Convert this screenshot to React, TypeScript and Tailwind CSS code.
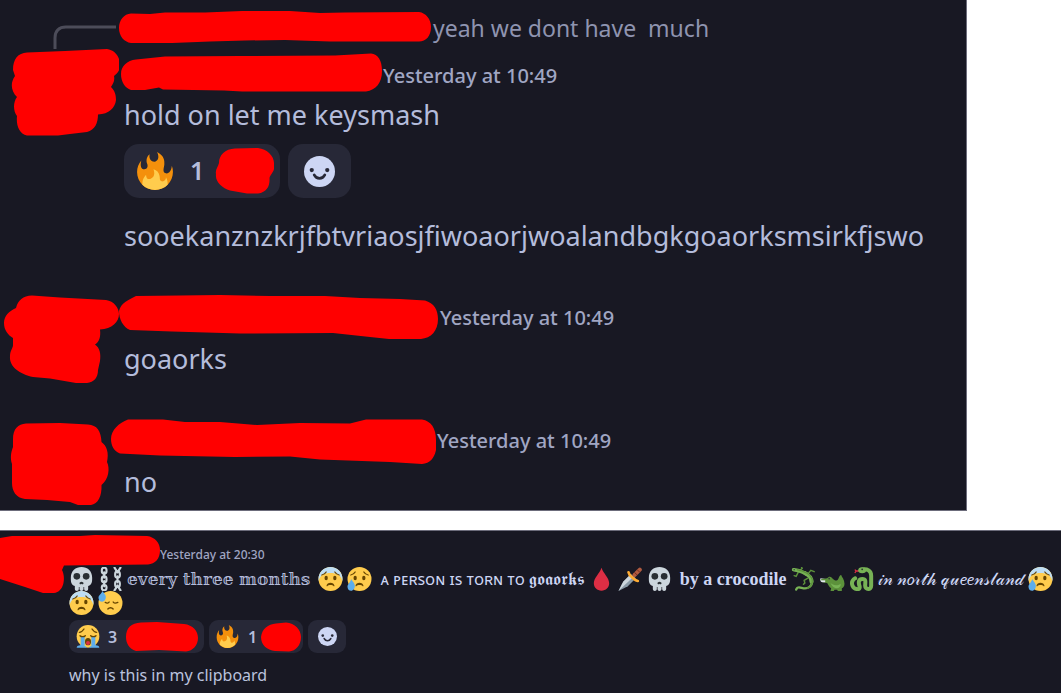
import type { ReactNode } from "react";

function Redaction({ box, d, className }: { box: string; d: string; className: string }) {
  return (
    <svg viewBox={box} className={`shrink-0 ${className}`} aria-hidden="true">
      <path fill="#ff0000" d={d} />
    </svg>
  );
}

function Emoji({ children, className = "size-[25px]", label }: { children: ReactNode; className?: string; label: string }) {
  return (
    <svg viewBox="0 0 36 36" role="img" aria-label={label} className={`shrink-0 ${className}`}>
      {children}
    </svg>
  );
}

function Fire({ className }: { className: string }) {
  return (
    <Emoji label="fire" className={className}>
      <path fill="#F4900C" d="M35 19c0-2.062-.367-4.039-1.04-5.868-.46 5.389-3.333 8.157-6.335 6.868-2.812-1.208-.917-5.917-.777-8.164.236-3.809-.012-8.169-6.931-11.794 2.875 5.5.333 8.917-2.333 9.125-2.958.231-5.667-2.542-4.667-7.042-3.238 2.386-3.332 6.402-2.333 9 1.042 2.708-.042 4.958-2.583 5.208-2.84.28-4.418-3.041-2.963-8.333C2.52 10.965 1 14.805 1 19c0 9.389 7.611 17 17 17s17-7.611 17-17z" />
      <path fill="#FFCC4D" d="M28.394 23.999c.148 3.084-2.561 4.293-4.019 3.709-2.106-.843-1.541-2.291-2.083-5.291s-2.625-5.083-5.708-6c2.25 6.333-1.247 8.667-3.08 9.084-1.872.426-3.753-.001-3.968-4.007C7.352 23.668 6 26.676 6 30c0 .368.023.73.055 1.09C9.125 34.124 13.342 36 18 36s8.875-1.876 11.945-4.91c.032-.36.055-.722.055-1.09 0-2.187-.584-4.236-1.606-6.001z" />
    </Emoji>
  );
}

function Skull() {
  return (
    <Emoji label="skull">
      <path fill="#CCD6DD" d="M34 16C34 6 26.837 0 18 0 9.164 0 2 6 2 16c0 5.574.002 10.388 6 12.64V33c0 1.657 1.343 3 3 3s3-1.343 3-3v-3.155c.327.012.66.155 1 .155v3c0 1.657 1.343 3 3 3s3-1.343 3-3v-3c.34 0 .673-.143 1-.155V33c0 1.657 1.344 3 3 3 1.657 0 3-1.343 3-3v-4.36c5.998-2.252 6-7.066 6-12.64z" />
      <circle fill="#292F33" cx="11" cy="14" r="5" />
      <circle fill="#292F33" cx="25" cy="14" r="5" />
      <path fill="#292F33" d="M19.903 23.062C19.651 22.449 18.9 22 18 22s-1.652.449-1.903 1.062c-.632.176-1.097.75-1.097 1.438 0 .828.671 1.5 1.5 1.5.655 0 1.206-.422 1.41-1.007.03 0 .06.007.09.007s.06-.007.09-.007c.204.585.755 1.007 1.41 1.007.828 0 1.5-.672 1.5-1.5 0-.688-.466-1.261-1.097-1.438z" />
    </Emoji>
  );
}

function Chains() {
  return (
    <Emoji label="chains">
      <g fill="none" stroke="#CCD6DD" strokeWidth="3.200" strokeLinecap="round">
        <rect x="5" y="1" width="7" height="9" rx="3.500" />
        <rect x="5" y="14" width="7" height="9" rx="3.500" />
        <rect x="5" y="27" width="7" height="8" rx="3.500" />
        <path d="M8.500 8v8M8.500 21v8" />
        <rect x="25" y="7" width="7" height="9" rx="3.500" />
        <rect x="25" y="21" width="7" height="9" rx="3.500" />
        <path d="M24 1l4.500 7M33 1l-4.500 7M28.500 14v9M28.500 28l-4.500 7M28.500 28l4.500 7" />
      </g>
    </Emoji>
  );
}

const DROP_LOW = "M11 28c0 4-2.200 7.500-5.500 7.500S0 33 0 29.500C0 26 4.500 23 5.500 18 8 22 11 25 11 28z";

function WorriedFace({ chilled = false, drop = false, label }: { chilled?: boolean; drop?: boolean; label: string }) {
  return (
    <Emoji label={label}>
      <circle fill="#FFCC4D" cx="18" cy="18" r="18" />
      {chilled && <path fill="#BDDDF4" d="M0 18C0 8 8 0 18 0s18 8 18 18c0 1-.1 2-.3 3C34 12 27 9 18 9S2 12 .3 21C.1 20 0 19 0 18z" />}
      <ellipse fill="#664500" cx="11.500" cy="16.500" rx="2.500" ry="3.500" />
      <ellipse fill="#664500" cx="24.500" cy="16.500" rx="2.500" ry="3.500" />
      <path fill="none" stroke="#664500" strokeWidth="1.900" strokeLinecap="round" d="M5 12c3-.5 5-2 6.500-4.500M31 12c-3-.5-5-2-6.500-4.500" />
      <path fill="#664500" d="M12 28c.5-3 3-4.500 6-4.500s5.500 1.500 6 4.500c.1.800-.7 1-1.200.7C21.500 27.500 20 27 18 27s-3.500.5-4.800 1.700c-.5.300-1.300.1-1.200-.7z" />
      {drop && <path fill="#5DADEC" d={DROP_LOW} />}
    </Emoji>
  );
}

function SweatFace() {
  return (
    <Emoji label="downcast face with sweat">
      <circle fill="#FFCC4D" cx="18" cy="18" r="18" />
      <g fill="none" stroke="#664500" strokeWidth="2" strokeLinecap="round">
        <path d="M10 17c2 1.500 5 1.500 6-.5M22 16.500c1 2 4 2 7 .5M14 27c2-2.500 6-2.500 8 0" />
      </g>
      <path fill="#5DADEC" d="M11 9c0 4-2.200 7-5.500 7S0 13.500 0 10C0 6.500 4.500 4 6 0c2.500 4 5 6 5 9z" />
    </Emoji>
  );
}

function SobFace() {
  return (
    <Emoji label="loudly crying face" className="size-6">
      <circle fill="#FFCC4D" cx="18" cy="17" r="17" />
      <path fill="#5DADEC" d="M7 17h6v15c2 0 3 1 3 2H1c0-3 3-3 6-4zM23 17h6v13c3 1 6 1 6 4H20c0-1 1-2 3-2z" />
      <g fill="none" stroke="#664500" strokeWidth="2" strokeLinecap="round">
        <path d="M6 16c2 2 6 2 8 0M22 16c2 2 6 2 8 0M5 11c3 0 5-2 7-5M31 11c-3 0-5-2-7-5" />
      </g>
      <ellipse fill="#664500" cx="18" cy="25" rx="4.500" ry="5.500" />
      <ellipse fill="#DD2E44" cx="18" cy="27" rx="3" ry="3" />
    </Emoji>
  );
}

function Blood() {
  return (
    <Emoji label="drop of blood">
      <path fill="#DD2E44" d="M29.500 24C29.500 31 24.500 35.500 18 35.500S6.500 31 6.500 24C6.500 16 15 10 18 1c3 9 11.500 15 11.500 23z" />
    </Emoji>
  );
}

function Dagger() {
  return (
    <Emoji label="dagger">
      <path fill="#8899A6" d="M19 11L7 22 0 36l14-7 12-12z" />
      <path fill="#CCD6DD" d="M18 11L7 22 0 36l22-21z" />
      <path fill="none" stroke="#AF5A40" strokeWidth="6" strokeLinecap="round" d="M24 12l8-8" />
      <path fill="none" stroke="#662113" strokeWidth="1.200" d="M24 8l4 4M28 4l4 4" />
      <path fill="none" stroke="#FFAC33" strokeWidth="4" strokeLinecap="round" d="M15 8c1 5 3 6 6 8s3 4 8 5" />
    </Emoji>
  );
}

function Lizard() {
  return (
    <Emoji label="lizard">
      <path fill="none" stroke="#5C913B" strokeWidth="2.200" strokeLinecap="round" d="M10 8L7 14l-3-1M12 6l4-4-1-2M25 10l4-5 5 2M24 17l-5 3 1 4-2 2" />
      <path fill="none" stroke="#77B255" strokeWidth="5" strokeLinecap="round" d="M3 4c6 1 13 2 20 7" />
      <path fill="none" stroke="#77B255" strokeWidth="6" strokeLinecap="round" d="M20 9c6 3 10 7 10 13" />
      <path fill="none" stroke="#77B255" strokeWidth="3.500" strokeLinecap="round" d="M31 21c0 8-6 12-13 11-5-1-9-4-11 2" />
      <path fill="none" stroke="#5C913B" strokeWidth="1.800" d="M8 4c10 2 20 6 23 14 1 7-2 12-8 14" />
      <circle fill="#292F33" cx="4" cy="4" r="1" />
    </Emoji>
  );
}

function Crocodile() {
  return (
    <Emoji label="crocodile">
      <path fill="#5C913B" d="M1 18l9-1c2-3 5-3 7-1 3 3 5 5 8 4 3-2 2-7 6-8 1 3 5 7 5 13 0 4-2 6-4 7v4h-6l-1-2h-4l-1 2h-5l1-4c-3-2-4-5-6-8l-7-1z" />
      <path fill="#77B255" d="M15 24c3 3 10 5 15 1 1 3-1 6-5 7-4 0-8-3-10-8z" />
      <path fill="#E1E8ED" d="M0 17l7 1v5H3c-3 0-4-4-3-6z" />
      <path stroke="#5C913B" strokeWidth="2" d="M1 19h9" />
      <circle fill="#292F33" cx="13" cy="17.500" r="1.200" />
    </Emoji>
  );
}

function Snake() {
  return (
    <Emoji label="snake">
      <path fill="none" stroke="#DD2E44" strokeWidth="1.900" d="M15 6h-5L8 4M10 6L8 9" />
      <path fill="none" stroke="#77B255" strokeWidth="6" strokeLinecap="round" strokeLinejoin="round" d="M18 4c9-2 14.500 2 14.500 9v15c0 7-9 6-9 0 0-5 2-10-4-10s-6 5-5 9c2 5 0 7-4 6-6-1-8-8-6-12 1-2 2-3 4-4" />
      <ellipse fill="#77B255" cx="19" cy="5" rx="6" ry="4.500" />
      <circle fill="#292F33" cx="19" cy="3.500" r="1.300" />
    </Emoji>
  );
}

function Smile({ className }: { className: string }) {
  return (
    <svg viewBox="0 0 32 32" className={className} aria-hidden="true">
      <circle cx="16" cy="16" r="16" fill="#cdd6f4" />
      <circle cx="8" cy="14.500" r="2.200" fill="#272837" />
      <circle cx="24" cy="14.500" r="2.200" fill="#272837" />
      <path d="M10.500 19.500c2.500 4.800 8.500 4.800 11 0" fill="none" stroke="#272837" strokeWidth="2.800" strokeLinecap="round" />
    </svg>
  );
}

const STAMP_LARGE = "text-[20px] leading-7 font-medium text-[#a0a6c3] whitespace-nowrap";
const BODY_LARGE = "text-[27px] leading-9 text-[#b4bcdb]";
const CHIP_LARGE = "flex h-[54px] items-center rounded-[15px] bg-[#272837]";
const CHIP_SMALL = "flex h-[33px] items-center rounded-[9px] bg-[#272837]";

export default function App() {
  return (
    <main className="min-h-screen bg-white font-['Noto_Sans','DejaVu_Sans',sans-serif]">
      <section className="mr-[94px] border-r border-b border-[#6c6c7b] bg-[#181823] pb-[5px]">
        <div className="flex h-[49px] items-start">
          <svg viewBox="0 0 119 49" className="h-[49px] w-[119px] shrink-0" aria-hidden="true">
            <path d="M55 49V38c0-7 4-11 11-11h50" fill="none" stroke="#4c4c59" strokeWidth="3" />
          </svg>
          <Redaction
            className="mt-2 h-9 w-[314px]"
            box="119 8 314 36"
            d="M119 28C119 20 124 14 131 13.500L150 14 165 12.500 205 12.500 242 11 290 11 320 13 345 12.500 419 12C426 13 431 19 431 27 431 36 426 41.500 419 41.500L330 41.500 285 40 245 40.500 210 41.500 172 43 131 43C124 42 119 36 119 28Z"
          />
          <p className="mt-[10px] text-[23px] leading-9 whitespace-pre text-[#8f94b0]">yeah we dont have  much</p>
        </div>

        <article className="flex h-[246px]">
          <Redaction
            className="mr-[5px] h-[88px] w-[119px]"
            box="0 49 119 88"
            d="M13 70C13 59 18 53 27 52.500L65 51 107 49C115 50 120 57 120 65 120 71 117 74 114 76 115 81 113 84 111 87 115 91 116 95 116 100 115 108 109 114 98 114.500 98 123 95 130 87 132L70 134 58 135.500 27 135.500C19 134 16 125 17 116 13 111 13 102 17 97 11 91 10 83 15 76Z"
          />
          <div className="-ml-[3px] grow">
            <header className="flex h-12 items-center">
              <Redaction
                className="h-[40px] w-[262px]"
                box="121 53 262 40"
                d="M121 74C121 66 127 60.500 136 59.500L165 56.500 240 56 335 55.500 371 53.500C378 54.500 382 60 382 71 382 83 376 90 366 91.500L242 91.500 224 90.500 163 89.500 159 87.500 145 90 131 90C125 88 121 82 121 74Z"
              />
              <time className={`${STAMP_LARGE} pt-1.5`}>Yesterday at 10:49</time>
            </header>
            <div className="ml-[3px]">
              <p className={BODY_LARGE}>hold on let me keysmash</p>
              <div className="mt-[11px] flex gap-2">
                <button className={`${CHIP_LARGE} w-[156px] pl-3`}>
                  <Fire className="size-[38px]" />
                  <span className="ml-4 text-[25px] font-semibold text-[#b5bddb]">1</span>
                  <Redaction
                    className="ml-[11px] h-[48px] w-[60px]"
                    box="215 147 60 48"
                    d="M216 174C215 170 218 167 219 163 219 155 225 149 235 148.500L258 148C267 149 274 156 274 163L274 169C273 173 270 175 269.500 178 270 186 267 192 258 193.500L247 193.500 230 190.500C222 188 215 182 216 174Z"
                  />
                </button>
                <button aria-label="Add reaction" className={`${CHIP_LARGE} w-[63px] justify-center`}>
                  <Smile className="size-[31px]" />
                </button>
              </div>
              <p className={`${BODY_LARGE} mt-5`}>sooekanznzkrjfbtvriaosjfiwoaorjwoalandbgkgoaorksmsirkfjswo</p>
            </div>
          </div>
        </article>

        <article className="flex h-[123px]">
          <Redaction
            className="h-[89px] w-[119px]"
            box="0 295 119 89"
            d="M4 323C4 316 9 311 16 308 18 300 23 296 32 295.500L60 297.500 106 300C114 301 119 308 119 314 119 322 112 329 100 329.500 101 337 99 342 95 344.500 100 348 101 354 100 361L98 370C98 378 94 382 87 383L76 383 50 378.500 33 377C20 374 9 367 10 356 10 351 13 348 13 345L13 338C8 335 4 330 4 323Z"
          />
          <div className="grow">
            <header className="flex h-[46px] items-center">
              <Redaction
                className="h-[46px] w-[321px]"
                box="119 295 321 46"
                d="M119 311C121 303 128 300 136 296L180 295.500 220 295 270 296 325 296 360 298 400 299 425 300.500C434 303 438 310 438 319 438 331 431 338 421 339L389 339 370 337 333 333 240 333.500 172 331.500 130 330C123 327 119 319 119 311Z"
              />
              <time className={STAMP_LARGE}>Yesterday at 10:49</time>
            </header>
            <p className={`${BODY_LARGE} ml-[5px]`}>goaorks</p>
          </div>
        </article>

        <article className="flex h-[87px]">
          <Redaction
            className="mt-[5px] h-[83px] w-[111px]"
            box="0 423 111 83"
            d="M13 439C13 429 18 424 26 423.500L60 423 88 424.500C97 425 101 431 101.500 442 107 446 109 453 107 462 110 468 109 479 101.500 485 102 496 98 504 91 505L78 505 70 502 47 500 25 499C16 498 12 491 12 483L12 464C10 458 11 452 13 447Z"
          />
          <div className="grow">
            <header className="flex h-[46px] items-center">
              <Redaction
                className="h-[47px] w-[326px]"
                box="111 418 326 47"
                d="M111 439C111 430 119 423 128 419.500L163 419.500 185 422 220 422 257 425 300 423 350 423.500 366 419.500 422 419.500C431 421 436 428 436 440L436 450C434 459 430 463 422 464L390 462 320 459.500 290 456.500 235 457 160 455.500 120 453.500C114 451 111 446 111 439Z"
              />
              <time className={STAMP_LARGE}>Yesterday at 10:49</time>
            </header>
            <p className={`${BODY_LARGE} ml-[13px]`}>no</p>
          </div>
        </article>
      </section>

      <section className="relative mt-[19px] border-t border-[#6c6c7b] bg-[#181823] pt-[12px] pb-[6px] pl-[69px]">
        <Redaction
          className="absolute top-1 left-0 h-[60px] w-40"
          box="0 535 160 60"
          d="M0 538L12 536 80 536 95 535 147 536C155 537 160 543 160 550 160 559 155 564 148 564.500L64 565.500 62 570C66 578 64 592 54 593L43 593 25 587 0 579Z"
        />
        <time className="ml-[91px] block h-6 text-[12px] leading-6 font-medium text-[#a0a6c3]">Yesterday at 20:30</time>
        <div className="flex flex-wrap items-center gap-x-[4px] text-[17px] leading-6 whitespace-nowrap text-[#cdd6f4] *:h-6">
          <Skull />
          <Chains />
          <span className="mr-1 font-['DejaVu_Serif',serif] text-[#b4bcdb]">𝕖𝕧𝕖𝕣𝕪 𝕥𝕙𝕣𝕖𝕖 𝕞𝕠𝕟𝕥𝕙𝕤</span>
          <WorriedFace chilled label="anxious face" />
          <WorriedFace drop label="sad but relieved face" />
          <span className="ml-1 text-[16px]">ᴀ ᴘᴇʀsᴏɴ ɪs ᴛᴏʀɴ ᴛᴏ</span>
          <span>𝖌𝖔𝖆𝖔𝖗𝖐𝖘</span>
          <Blood />
          <Dagger />
          <Skull />
          <span className="ml-1 font-['Liberation_Serif',serif] text-[18px] font-bold">by a crocodile</span>
          <Lizard />
          <Crocodile />
          <Snake />
          <span>𝒾𝓃 𝓃𝑜𝓇𝓉𝒽 𝓆𝓊𝑒𝑒𝓃𝓈𝓁𝒶𝓃𝒹</span>
          <WorriedFace chilled drop label="anxious face with sweat" />
          <WorriedFace chilled label="anxious face" />
          <SweatFace />
        </div>
        <div className="mt-[5px] flex gap-[5px]">
          <button className={`${CHIP_SMALL} w-[135px] pl-[7px]`}>
            <SobFace />
            <span className="ml-2 text-[16px] font-semibold text-[#b5bddb]">3</span>
            <Redaction
              className="ml-2 h-[30px] w-[73px]"
              box="126 622 73 30"
              d="M127 637C127 628 132 623 142 622.500L158 622 185 624C194 625 199 631 199 638 199 645 194 651 187 651.500L160 650 137 651C130 649 127 643 127 637Z"
            />
          </button>
          <button className={`${CHIP_SMALL} w-[94px] pl-[7px]`}>
            <Fire className="size-[23px]" />
            <span className="ml-[9px] text-[16px] font-semibold text-[#b5bddb]">1</span>
            <Redaction
              className="ml-1 h-[30px] w-[41px]"
              box="261 622 41 30"
              d="M261 637C262 629 268 624 276 623.500L286 622.500C295 623 301 630 301 637 301 645 296 651 289 651.500L275 651C267 650 261 645 261 637Z"
            />
          </button>
          <button aria-label="Add reaction" className={`${CHIP_SMALL} w-[38px] justify-center`}>
            <Smile className="size-[19px]" />
          </button>
        </div>
        <p className="mt-[10px] text-[16px] leading-6 text-[#bac2de]">why is this in my clipboard</p>
      </section>
    </main>
  );
}
